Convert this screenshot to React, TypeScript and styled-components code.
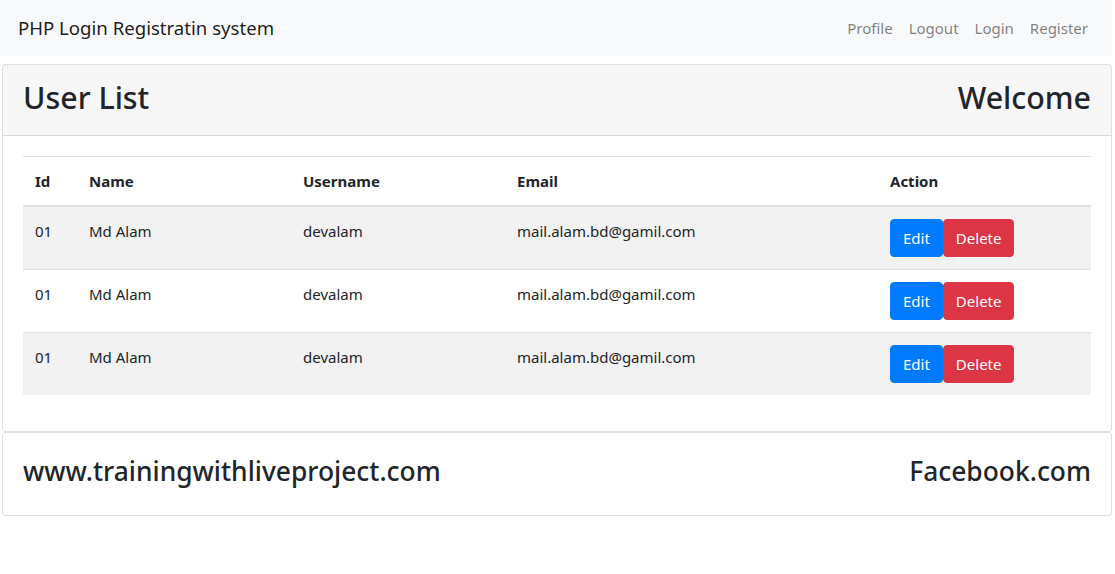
import styled, { createGlobalStyle } from "styled-components";

const GlobalStyle = createGlobalStyle`
  body {
    margin: 0;
    background: #ffffff;
    font-family: "Noto Sans", "Open Sans", sans-serif;
    color: #212529;
  }
  * {
    box-sizing: border-box;
  }
`;

type User = {
  id: string;
  name: string;
  username: string;
  email: string;
};

const users: User[] = [
  { id: "01", name: "Md Alam", username: "devalam", email: "mail.alam.bd@gamil.com" },
  { id: "01", name: "Md Alam", username: "devalam", email: "mail.alam.bd@gamil.com" },
  { id: "01", name: "Md Alam", username: "devalam", email: "mail.alam.bd@gamil.com" },
];

const navLinks = ["Profile", "Logout", "Login", "Register"];

const App = () => {
  return (
    <Page>
      <GlobalStyle />
      <Navbar>
        <Brand>PHP Login Registratin system</Brand>
        <NavList>
          {navLinks.map(link => (
            <NavLink key={link}>{link}</NavLink>
          ))}
        </NavList>
      </Navbar>

      <Card $gap>
        <CardHeader>
          <HeaderTitle>User List</HeaderTitle>
          <HeaderTitle>Welcome</HeaderTitle>
        </CardHeader>
        <CardBody>
          <Table>
            <colgroup>
              <col style={{ width: 54 }} />
              <col style={{ width: 214 }} />
              <col style={{ width: 214 }} />
              <col style={{ width: 373 }} />
              <col />
            </colgroup>
            <thead>
              <tr>
                <Th>Id</Th>
                <Th>Name</Th>
                <Th>Username</Th>
                <Th>Email</Th>
                <Th>Action</Th>
              </tr>
            </thead>
            <tbody>
              {users.map((user, index) => (
                <Row key={index} $striped={index % 2 === 0}>
                  <Td>{user.id}</Td>
                  <Td>{user.name}</Td>
                  <Td>{user.username}</Td>
                  <Td>{user.email}</Td>
                  <Td>
                    <Button $variant="primary">Edit</Button>
                    <Button $variant="danger">Delete</Button>
                  </Td>
                </Row>
              ))}
            </tbody>
          </Table>
        </CardBody>
      </Card>

      <Card>
        <FooterBody>
          <FooterTitle>www.trainingwithliveproject.com</FooterTitle>
          <FooterTitle>Facebook.com</FooterTitle>
        </FooterBody>
      </Card>
    </Page>
  );
};

const Page = styled.div`
  width: 1112px;
`;

const Navbar = styled.nav`
  display: flex;
  align-items: center;
  justify-content: space-between;
  height: 56px;
  padding: 8px 16px;
  background-color: #f8f9fa;
`;

const Brand = styled.span`
  padding: 5px 0 5px 2px;
  font-size: 18.6px;
  line-height: 30px;
  color: rgba(0, 0, 0, 0.9);
`;

const NavList = styled.ul`
  display: flex;
  margin: 0;
  padding: 0;
  list-style: none;
`;

const NavLink = styled.li`
  padding: 8px 8px;
  font-size: 15px;
  line-height: 24px;
  color: rgba(0, 0, 0, 0.5);
  cursor: pointer;
`;

const Card = styled.div<{ $gap?: boolean }>`
  width: 1110px;
  margin-left: 2px;
  margin-top: ${p => (p.$gap ? "8px" : "0")};
  background-color: #ffffff;
  border: 1px solid rgba(0, 0, 0, 0.125);
  border-radius: 4px;
`;

const CardHeader = styled.div`
  display: flex;
  justify-content: space-between;
  padding: 12px 20px;
  background-color: rgba(0, 0, 0, 0.03);
  border-bottom: 1px solid rgba(0, 0, 0, 0.125);
`;

const HeaderTitle = styled.h2`
  margin: 2px 0 6px;
  font-size: 30.4px;
  font-weight: 500;
  line-height: 38.4px;
`;

const CardBody = styled.div`
  padding: 20px;
`;

const Table = styled.table`
  width: 100%;
  margin-bottom: 16px;
  border-collapse: collapse;
  table-layout: fixed;
`;

const Th = styled.th`
  padding: 12px;
  text-align: left;
  font-size: 15px;
  font-weight: 700;
  line-height: 24px;
  border-top: 1px solid #dee2e6;
  border-bottom: 2px solid #dee2e6;
`;

const Row = styled.tr<{ $striped: boolean }>`
  background-color: ${p => (p.$striped ? "rgba(0, 0, 0, 0.05)" : "transparent")};
`;

const Td = styled.td`
  padding: 12px;
  vertical-align: top;
  font-size: 15px;
  line-height: 24px;
  border-top: 1px solid #dee2e6;
`;

const Button = styled.button<{ $variant: "primary" | "danger" }>`
  padding: 6px 12px;
  font-family: inherit;
  font-size: 15px;
  line-height: 24px;
  color: #ffffff;
  background-color: ${p => (p.$variant === "primary" ? "#007bff" : "#dc3545")};
  border: 1px solid ${p => (p.$variant === "primary" ? "#007bff" : "#dc3545")};
  border-radius: 4px;
  cursor: pointer;
`;

const FooterBody = styled.div`
  display: flex;
  justify-content: space-between;
  padding: 20px;
`;

const FooterTitle = styled.h3`
  margin: 2px 0 6px;
  font-size: 26.4px;
  font-weight: 500;
  line-height: 33.6px;
`;

export default App;
